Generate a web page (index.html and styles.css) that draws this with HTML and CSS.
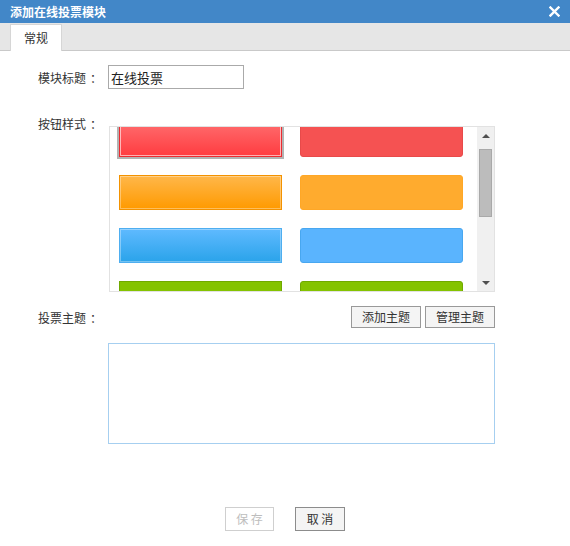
FILE: index.html
```html
<!DOCTYPE html>
<html lang="zh-CN">
<head>
<meta charset="utf-8">
<title>添加在线投票模块</title>
<link rel="stylesheet" href="styles.css">
</head>
<body>
<div class="dialog">
  <div class="titlebar">
    <span class="title">添加在线投票模块</span>
    <span class="close">
      <svg width="11" height="11" viewBox="0 0 11 11"><path d="M1.5 1.5 L9.5 9.5 M9.5 1.5 L1.5 9.5" stroke="#fff" stroke-width="2.4" stroke-linecap="square"/></svg>
    </span>
  </div>
  <div class="tabbar"><div class="tab">常规</div></div>
  <div class="form">
    <div class="row row-title">
      <label class="lbl">模块标题<span class="colon">：</span></label>
      <input class="text-input" type="text" value="在线投票">
    </div>
    <div class="row row-style">
      <label class="lbl lbl-top">按钮样式<span class="colon">：</span></label>
      <div class="style-box">
        <div class="style-view">
          <div class="style-grid">
            <div class="sb g-red selected"></div>
            <div class="sb f-red"></div>
            <div class="sb g-orange"></div>
            <div class="sb f-orange"></div>
            <div class="sb g-blue"></div>
            <div class="sb f-blue"></div>
            <div class="sb g-green"></div>
            <div class="sb f-green"></div>
          </div>
        </div>
        <div class="scrollbar">
          <div class="sc-btn"><span class="arrow-up"></span></div>
          <div class="sc-track"><div class="sc-thumb"></div></div>
          <div class="sc-btn"><span class="arrow-down"></span></div>
        </div>
      </div>
    </div>
    <div class="row row-topic">
      <label class="lbl">投票主题<span class="colon">：</span></label>
      <div class="topic-actions">
        <button class="btn">添加主题</button>
        <button class="btn">管理主题</button>
      </div>
    </div>
    <div class="row row-area">
      <div class="topic-area"></div>
    </div>
  </div>
  <div class="footer">
    <button class="fbtn save" disabled>保 存</button>
    <button class="fbtn cancel">取 消</button>
  </div>
</div>
</body>
</html>
```
FILE: styles.css
```css
* { box-sizing: border-box; }
html, body { margin: 0; padding: 0; background: #fff; }
body {
  width: 570px;
  height: 546px;
  overflow: hidden;
  font-family: "Noto Sans CJK SC", "Microsoft YaHei", sans-serif;
  font-size: 12px;
  color: #333;
}
.dialog { width: 570px; height: 546px; }

.titlebar {
  height: 23px;
  background: #4287c8;
  display: flex;
  align-items: center;
  justify-content: space-between;
  padding: 0 10px 0 10px;
}
.title {
  color: #fff;
  font-weight: bold;
  font-size: 12px;
  line-height: 23px;
}
.close { display: flex; width: 11px; height: 11px; }

.tabbar {
  height: 28px;
  background: #e6e6e6;
  border-bottom: 1px solid #c9c9c9;
  display: flex;
  align-items: flex-end;
  padding-left: 10px;
}
.tab {
  width: 52px;
  height: 27px;
  margin-bottom: -1px;
  background: #fff;
  border: 1px solid #d6d6d6;
  border-bottom: none;
  text-align: center;
  line-height: 25px;
  font-size: 12px;
  color: #333;
}

.form { padding: 14px 0 0 38px; }
.row { display: flex; width: 457px; }
.lbl {
  width: 70px;
  flex: none;
  font-size: 12px;
  color: #333;
}
.colon { padding-left: 4px; }
.row-title { height: 24px; align-items: center; }
.text-input {
  width: 136px;
  height: 24px;
  border: 1px solid #aaa;
  padding: 0 0 0 2px;
  margin: 0;
  font-family: "Noto Sans CJK SC", sans-serif;
  font-size: 13px;
  color: #222;
  outline: none;
}

.row-style { margin-top: 28px; align-items: flex-start; }
.lbl-top { line-height: 14px; }
.style-box {
  margin-top: 9px;
  margin-left: 1px;
  width: 388px;
  height: 166px;
  border: 1px solid #e2e2e2;
  display: flex;
}
.style-view {
  flex: 1;
  overflow: hidden;
  padding-left: 9px;
}
.style-grid {
  margin-top: -5px;
  display: grid;
  grid-template-columns: 163px 163px;
  grid-auto-rows: 35px;
  column-gap: 18px;
  row-gap: 18px;
}
.sb { border: 1px solid; }
.g-red {
  background: linear-gradient(#ff6b6d, #ff3c40);
  border-color: #ec2b30;
  box-shadow: inset 0 0 0 1px rgba(255,255,255,0.55);
}
.selected { box-shadow: inset 0 0 0 1px rgba(255,255,255,0.6), 0 0 0 2px #b3b3b3; }
.g-orange {
  background: linear-gradient(#ffb74a, #ff9a00);
  border-color: #f39200;
  box-shadow: inset 0 0 0 1px rgba(255,255,255,0.35);
}
.g-blue {
  background: linear-gradient(#5fbaff, #2aa3ea);
  border-color: #4eaef0;
  box-shadow: inset 0 0 0 1px rgba(255,255,255,0.35);
}
.g-green {
  background: #84c300;
  border-color: #70a900;
}
.f-red { background: #f55252; border-color: #e84a4a; border-radius: 3px; }
.f-orange { background: #ffab2e; border-color: #ffa726; border-radius: 3px; }
.f-blue { background: #5ab4fe; border-color: #48a7f0; border-radius: 3px; }
.f-green { background: #84c300; border-color: #70a900; border-radius: 3px; }

.scrollbar {
  width: 17px;
  flex: none;
  background: #f0f0f0;
  display: flex;
  flex-direction: column;
}
.sc-btn {
  height: 17px;
  flex: none;
  display: flex;
  align-items: center;
  justify-content: center;
}
.arrow-up {
  width: 0; height: 0;
  border-left: 4px solid transparent;
  border-right: 4px solid transparent;
  border-bottom: 4px solid #505050;
}
.arrow-down {
  width: 0; height: 0;
  border-left: 4px solid transparent;
  border-right: 4px solid transparent;
  border-top: 4px solid #505050;
}
.sc-track { flex: 1; padding: 5px 2px 0 2px; }
.sc-thumb {
  height: 68px;
  background: #bcbcbc;
  border: 1px solid #a9a9a9;
}

.row-topic { margin-top: 14px; height: 22px; align-items: center; }
.topic-actions { margin-left: auto; display: flex; gap: 4px; }
.btn {
  width: 70px;
  height: 22px;
  padding: 0;
  margin: 0;
  border: 1px solid #999;
  background: #f4f4f4;
  color: #333;
  font-family: "Noto Sans CJK SC", sans-serif;
  font-size: 12px;
  line-height: 20px;
}

.row-area { margin-top: 15px; }
.topic-area {
  margin-left: 70px;
  width: 387px;
  height: 101px;
  border: 1px solid #a6cff0;
}

.footer {
  margin-top: 63px;
  display: flex;
  justify-content: center;
  gap: 21px;
}
.fbtn {
  height: 24px;
  padding: 0;
  margin: 0;
  font-family: "Noto Sans CJK SC", sans-serif;
  font-size: 12px;
  line-height: 22px;
}
.save {
  width: 49px;
  background: #fff;
  border: 1px solid #cfcfcf;
  color: #bdbdbd;
}
.cancel {
  width: 50px;
  background: #f4f4f4;
  border: 1px solid #8c8c8c;
  color: #333;
}
```
